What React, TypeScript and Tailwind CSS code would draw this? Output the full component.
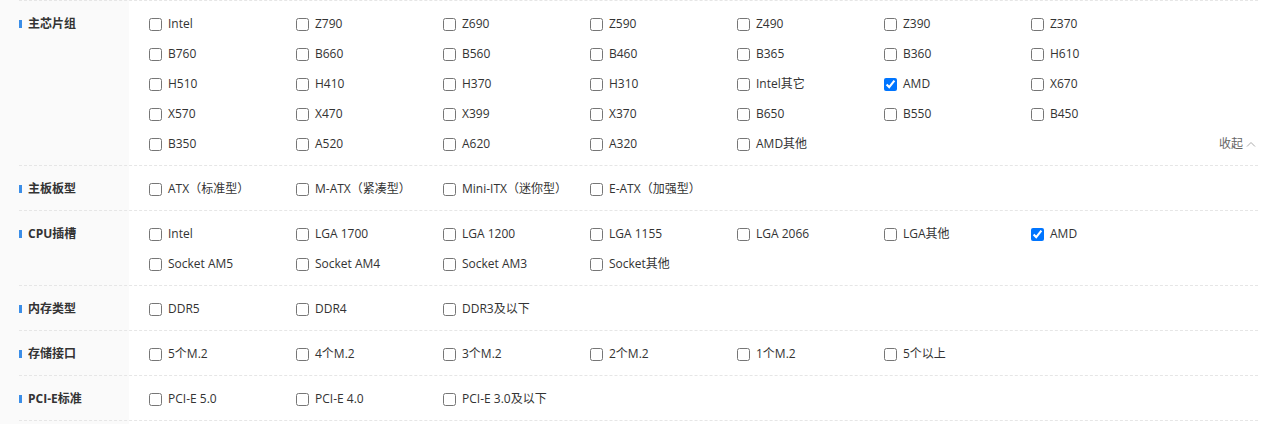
import React from 'react';

type Group = {
    title: string;
    options: string[];
    checked?: string[];
    collapsible?: boolean;
};

const groups: Group[] = [
    {
        title: '主芯片组',
        options: [
            'Intel', 'Z790', 'Z690', 'Z590', 'Z490', 'Z390', 'Z370',
            'B760', 'B660', 'B560', 'B460', 'B365', 'B360', 'H610',
            'H510', 'H410', 'H370', 'H310', 'Intel其它', 'AMD', 'X670',
            'X570', 'X470', 'X399', 'X370', 'B650', 'B550', 'B450',
            'B350', 'A520', 'A620', 'A320', 'AMD其他',
        ],
        checked: ['AMD'],
        collapsible: true,
    },
    {
        title: '主板板型',
        options: ['ATX（标准型）', 'M-ATX（紧凑型）', 'Mini-ITX（迷你型）', 'E-ATX（加强型）'],
    },
    {
        title: 'CPU插槽',
        options: ['Intel', 'LGA 1700', 'LGA 1200', 'LGA 1155', 'LGA 2066', 'LGA其他', 'AMD', 'Socket AM5', 'Socket AM4', 'Socket AM3', 'Socket其他'],
        checked: ['AMD'],
    },
    { title: '内存类型', options: ['DDR5', 'DDR4', 'DDR3及以下'] },
    { title: '存储接口', options: ['5个M.2', '4个M.2', '3个M.2', '2个M.2', '1个M.2', '5个以上'] },
    { title: 'PCI-E标准', options: ['PCI-E 5.0', 'PCI-E 4.0', 'PCI-E 3.0及以下'] },
];

const FilterRow = ({ group }: { group: Group }) => (
    <div className="flex border-b border-dashed border-[#e6e6e6] pt-[8px] pb-[6px]">
        {/* label column */}
        <div className="w-[110px] shrink-0 h-[30px] flex items-center">
            <span className="w-[3px] h-[8px] bg-[#3b8ee8]" />
            <span className="ml-[6px] text-[12px] font-bold text-[#333]">{group.title}</span>
        </div>

        {/* options */}
        <div className="grid grid-cols-[repeat(7,147px)] pl-[20px]">
            {group.options.map((opt, i) => (
                <label key={opt + i} className="h-[30px] flex items-center cursor-pointer">
                    <input
                        type="checkbox"
                        defaultChecked={group.checked?.includes(opt)}
                        className="m-0 w-[13px] h-[13px]"
                    />
                    <span className="ml-[6px] text-[12px] text-[#333] whitespace-nowrap">{opt}</span>
                </label>
            ))}
        </div>

        {group.collapsible && (
            <div className="ml-auto self-end h-[30px] flex items-center pr-[2px] text-[12px] text-[#666] cursor-pointer">
                收起
                <svg width="10" height="6" viewBox="0 0 10 6" className="ml-[3px]">
                    <path d="M1 5.5 L5 1.5 L9 5.5" fill="none" stroke="#aaa" strokeWidth="1" />
                </svg>
            </div>
        )}
    </div>
);

export default function App() {
    return (
        <div
            className="w-[1278px] h-[424px] bg-[linear-gradient(to_right,#fafafa_129px,#ffffff_129px)]"
            style={{ fontFamily: '"Open Sans", "Noto Sans CJK SC", sans-serif' }}
        >
            <div className="ml-[19px] w-[1239px] border-t border-dashed border-[#e6e6e6]">
                {groups.map((g) => (
                    <FilterRow key={g.title} group={g} />
                ))}
            </div>
        </div>
    );
}
